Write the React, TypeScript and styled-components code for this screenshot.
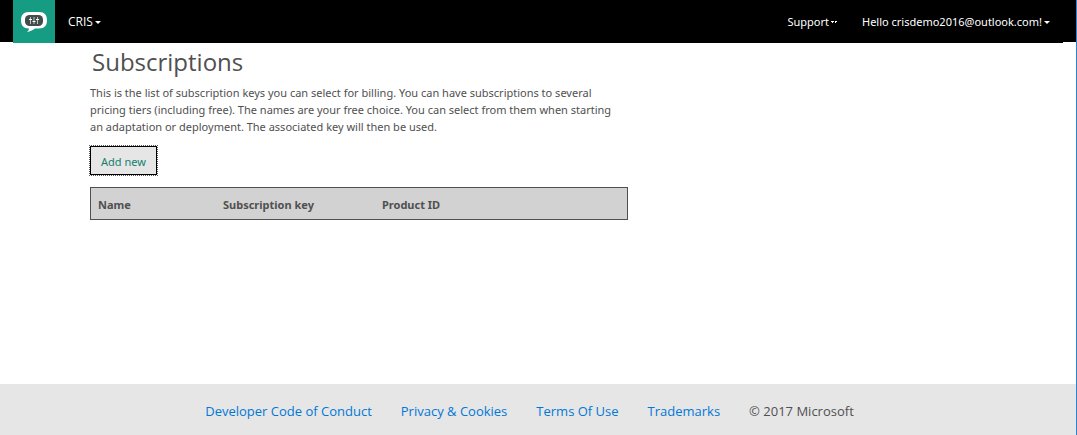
import React from 'react';
import styled, { createGlobalStyle } from 'styled-components';

const GlobalStyle = createGlobalStyle`
  *, *::before, *::after { box-sizing: border-box; }
  body {
    margin: 0;
    background: #fff;
    color: #505050;
    font-family: 'Segoe UI', 'Noto Sans', 'Open Sans', sans-serif;
    font-size: 11px;
    line-height: 17px;
  }
`;

const Page = styled.div`
  display: flex;
  flex-direction: column;
  min-height: 100vh;
  border-right: 1px solid #2a84d2;
`;

const Header = styled.header`
  height: 42px;
  padding: 0 13px;
  background: #000;
`;

const Nav = styled.nav`
  display: flex;
  align-items: center;
  height: 43px;
  background: #000;
`;

const Logo = styled.a`
  display: flex;
  align-items: center;
  justify-content: center;
  width: 42px;
  height: 43px;
  margin-right: 13px;
  background: #169c82;
`;

const MenuButton = styled.button`
  display: flex;
  align-items: center;
  gap: 2px;
  padding: 0;
  border: 0;
  background: none;
  color: #fff;
  font: inherit;
  font-family: 'Segoe UI', 'Open Sans', sans-serif;
  font-size: 12px;
  white-space: nowrap;
  cursor: pointer;
`;

const UserMenus = styled.div`
  display: flex;
  gap: 25px;
  margin-left: auto;
  padding-right: 13px;

  ${MenuButton} {
    font-family: 'Segoe UI', 'Noto Sans', sans-serif;
    font-size: 11px;
  }
`;

const Main = styled.main`
  flex: 1;
  width: 100%;
  max-width: 628px;
  padding: 3px 0 24px 90px;
`;

const Title = styled.h1`
  margin: 0 0 5px;
  padding-left: 2px;
  font-family: 'Segoe UI', 'Open Sans', sans-serif;
  font-size: 24px;
  font-weight: 400;
  line-height: 34px;
`;

const Intro = styled.p`
  margin: 0 0 11px;
  padding-right: 8px;
`;

const AddButton = styled.button`
  display: block;
  height: 29px;
  padding: 2px 10px 0;
  border: 1px solid #000;
  outline: 1px dotted #555;
  background: #e6e6e6;
  color: #13806e;
  font: inherit;
  cursor: pointer;
`;

const KeyTable = styled.table`
  width: 100%;
  margin-top: 12px;
  border: 1px solid #505050;
  border-spacing: 0;
  background: #d2d2d2;
  table-layout: fixed;
`;

const HeadCell = styled.th<{ $width?: string }>`
  width: ${({ $width }) => $width ?? 'auto'};
  height: 31px;
  padding: 2px 7px 0;
  font-weight: 700;
  text-align: left;
`;

const Footer = styled.footer`
  display: flex;
  align-items: center;
  justify-content: center;
  gap: 29px;
  min-height: 51px;
  padding: 2px 17px 0 0;
  background: #e6e6e6;
  font-family: 'Segoe UI', 'Open Sans', sans-serif;
  font-size: 13px;
  line-height: 20px;
`;

const FooterLink = styled.a`
  color: #0078d7;
  text-decoration: none;
`;

const Caret = ({ split = false }: { split?: boolean }) => (
  <svg width="6" height="5" viewBox="0 0 6 5" fill="#fff" aria-hidden="true">
    {split ? <path d="M0 2h3v1H2v1H1V3H0zM4 2h2v1H5v1H4z" /> : <path d="M0 2h6L3 5z" />}
  </svg>
);

const SpeechLogo = () => (
  <svg width="26" height="20" viewBox="0 0 26 20" aria-hidden="true">
    <path d="M8 0H18C23.500 0 26 3 26 8.250S23.500 16.500 18 16.500H14C11.500 18.500 9 19.500 6 20Q8 18.500 8 16.500C2.500 16.500 0 13.500 0 8.250S2.500 0 8 0Z" fill="#fff" />
    <rect x="4" y="3" width="18" height="11" rx="4.500" fill="#424c4a" />
    <path d="M9.500 5v7M13 5v7M16.500 5v7" stroke="#bcc5c3" strokeWidth="1" />
    <path d="M8 7.500h3M11.500 9.500h3M15 7.500h3" stroke="#fff" strokeWidth="1" />
  </svg>
);

const footerLinks = ['Developer Code of Conduct', 'Privacy & Cookies', 'Terms Of Use', 'Trademarks'];

export default function App() {
  return (
    <>
      <GlobalStyle />
      <Page>
        <Header>
          <Nav aria-label="Main">
            <Logo href="#" aria-label="Home"><SpeechLogo /></Logo>
            <MenuButton type="button">CRIS<Caret /></MenuButton>
            <UserMenus>
              <MenuButton type="button">Support<Caret split /></MenuButton>
              <MenuButton type="button">Hello crisdemo2016@outlook.com!<Caret /></MenuButton>
            </UserMenus>
          </Nav>
        </Header>
        <Main>
          <Title>Subscriptions</Title>
          <Intro>
            This is the list of subscription keys you can select for billing. You can have subscriptions to several
            pricing tiers (including free). The names are your free choice. You can select from them when starting
            an adaptation or deployment. The associated key will then be used.
          </Intro>
          <AddButton type="button">Add new</AddButton>
          <KeyTable>
            <thead>
              <tr>
                <HeadCell scope="col" $width="125px">Name</HeadCell>
                <HeadCell scope="col" $width="159px">Subscription key</HeadCell>
                <HeadCell scope="col">Product ID</HeadCell>
              </tr>
            </thead>
          </KeyTable>
        </Main>
        <Footer>
          {footerLinks.map((label) => <FooterLink key={label} href="#">{label}</FooterLink>)}
          <span>© 2017 Microsoft</span>
        </Footer>
      </Page>
    </>
  );
}
